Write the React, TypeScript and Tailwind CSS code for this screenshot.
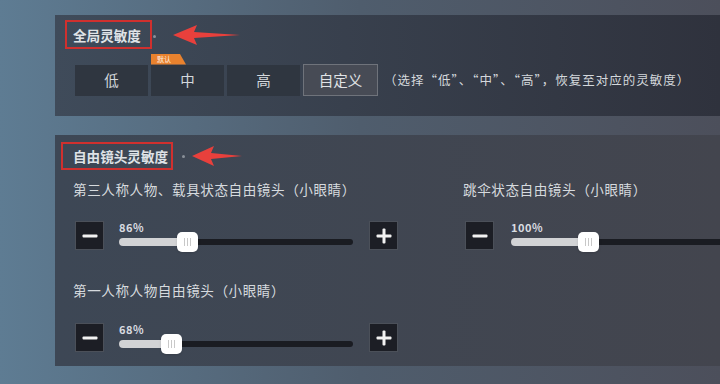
import React from 'react';

const FONT = '"Noto Sans CJK SC", "Noto Sans", sans-serif';

const Arrow: React.FC<{ width: number; head: number }> = ({ width, head }) => (
  <svg width={width} height={22} viewBox={`0 0 ${width} 22`} className="block">
    <path
      d={`M0 11 L${head} 1 L${head - 3} 8 L${width} 11 L${head - 3} 14 L${head} 21 Z`}
      fill="#e8403c"
    />
  </svg>
);

const SquareButton: React.FC<{ kind: 'minus' | 'plus' }> = ({ kind }) => (
  <div className="w-[29px] h-[29px] shrink-0 bg-[#1c1e25] border border-[#4b5059] flex items-center justify-center">
    <svg width="18" height="18" viewBox="0 0 18 18">
      <rect x="1.5" y="7.5" width="15" height="3" rx="1" fill="#f2f2f2" />
      {kind === 'plus' && <rect x="7.5" y="1.5" width="3" height="15" rx="1" fill="#f2f2f2" />}
    </svg>
  </div>
);

const Slider: React.FC<{ value: string; thumb: number; width: number }> = ({ value, thumb, width }) => (
  <div className="flex flex-col shrink-0" style={{ width }}>
    <span className="text-[11px] leading-[12px] font-bold text-[#d9dce0] tracking-[0.5px]">{value}</span>
    <div className="relative mt-[6px] h-[6px] w-full bg-[#1a1c22] rounded-sm">
      <div className="absolute left-0 top-[-1px] h-[8px] bg-[#d2d3d5] rounded-sm" style={{ width: thumb + 10 }} />
      <div
        className="absolute top-[-7px] w-[21px] h-[20px] bg-white rounded-[5px] shadow flex items-center justify-center gap-[2px]"
        style={{ left: thumb }}
      >
        <div className="w-px h-[8px] bg-[#c8c8c8]" />
        <div className="w-px h-[8px] bg-[#c8c8c8]" />
        <div className="w-px h-[8px] bg-[#c8c8c8]" />
      </div>
    </div>
  </div>
);

const Dot: React.FC = () => <div className="w-[3px] h-[3px] rounded-full bg-[#8a9099]" />;

const levels = ['低', '中', '高'];

export default function App() {
  return (
    <div
      className="w-[720px] h-[384px] overflow-hidden flex flex-col pl-[55px] pt-[15px] bg-gradient-to-r from-[#5e7c93] via-[#4f5d6d] to-[#4c4f5b]"
      style={{ fontFamily: FONT }}
    >
      {/* 全局灵敏度 */}
      <div className="h-[101px] shrink-0 bg-gradient-to-r from-[#3f4b5a] to-[#2f323d] pl-[10px] pt-[5px]">
        <div className="flex items-center">
          <div className="w-[87px] h-[29px] border-2 border-[#d0302e] flex items-center pl-[6px]">
            <span className="text-[13.6px] leading-[16px] font-bold text-[#dfe2e6] whitespace-nowrap">全局灵敏度</span>
          </div>
          <div className="ml-[1px] mt-[4px]"><Dot /></div>
          <div className="ml-[17px]"><Arrow width={67} head={24} /></div>
        </div>
        <div className="flex items-center mt-[15px] ml-[10px] gap-[3px]">
          {levels.map((l, i) => (
            <div
              key={l}
              className="relative w-[73px] h-[31px] bg-[#2f3640] flex items-center justify-center text-[14.5px] text-[#d4d8dc]"
            >
              {i === 1 && (
                <div className="absolute left-0 top-[-11px] w-[35px] h-[11px] bg-[#e9822e] [clip-path:polygon(0_0,82%_0,100%_100%,0_100%)] flex items-center pl-[6px]">
                  <span className="text-[7px] leading-[8px] text-[#fff3e6]">默认</span>
                </div>
              )}
              {l}
            </div>
          ))}
          <div className="w-[75px] h-[32px] bg-[#474b55] border border-[#6f737b] flex items-center justify-center text-[14.5px] text-[#e0e3e6]">
            自定义
          </div>
          <span className="ml-[3px] text-[12.5px] tracking-[1px] text-[#d4d8dc] whitespace-nowrap">
            （选择“低”、“中”、“高”，恢复至对应的灵敏度）
          </span>
        </div>
      </div>

      {/* 自由镜头灵敏度 */}
      <div className="mt-[19px] h-[231px] shrink-0 bg-gradient-to-r from-[#3d4755] to-[#43454e] pt-[7px] pl-[6px]">
        <div className="flex items-center">
          <div className="w-[112px] h-[28px] border-2 border-[#d0302e] flex items-center pl-[10px]">
            <span className="text-[13.6px] leading-[16px] font-bold text-[#dfe2e6] whitespace-nowrap">自由镜头灵敏度</span>
          </div>
          <div className="ml-[9px]"><Dot /></div>
          <div className="ml-[7px]"><Arrow width={50} head={22} /></div>
        </div>

        <div className="flex pl-[12px] mt-[11px]">
          <div className="w-[390px] shrink-0 flex flex-col">
            <span className="text-[13.6px] leading-[16px] tracking-[0.55px] text-[#d6dade] whitespace-nowrap">
              第三人称人物、载具状态自由镜头（小眼睛）
            </span>
            <div className="flex items-start mt-[24px] ml-[2px]">
              <SquareButton kind="minus" />
              <div className="ml-[15px]"><Slider value="86%" thumb={58} width={234} /></div>
              <div className="ml-[16px]"><SquareButton kind="plus" /></div>
            </div>
            <span className="mt-[32px] text-[13.6px] leading-[16px] tracking-[0.55px] text-[#d6dade] whitespace-nowrap">
              第一人称人物自由镜头（小眼睛）
            </span>
            <div className="flex items-start mt-[25px] ml-[2px]">
              <SquareButton kind="minus" />
              <div className="ml-[15px]"><Slider value="68%" thumb={42} width={234} /></div>
              <div className="ml-[16px]"><SquareButton kind="plus" /></div>
            </div>
          </div>
          <div className="flex flex-col">
            <span className="text-[13.6px] leading-[16px] tracking-[0.55px] text-[#d6dade] whitespace-nowrap">
              跳伞状态自由镜头（小眼睛）
            </span>
            <div className="flex items-start mt-[24px] ml-[2px]">
              <SquareButton kind="minus" />
              <div className="ml-[17px]"><Slider value="100%" thumb={67} width={260} /></div>
            </div>
          </div>
        </div>
      </div>
    </div>
  );
}
